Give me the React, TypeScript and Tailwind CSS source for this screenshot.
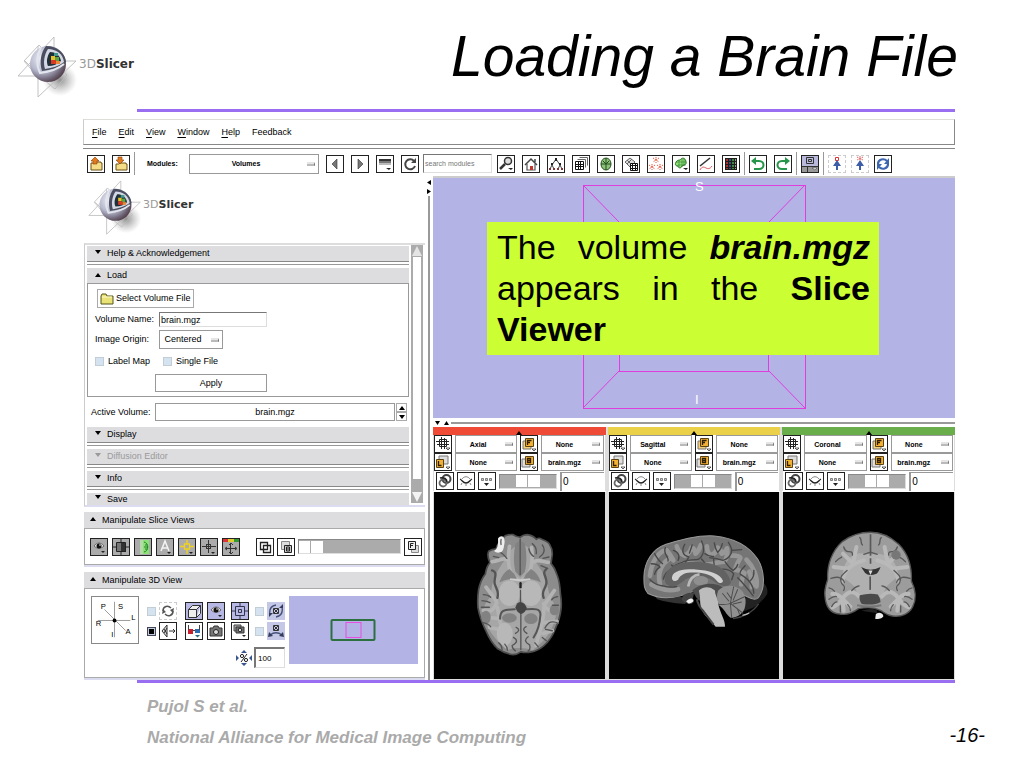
import { ReactNode } from 'react';
import clsx from 'clsx';

const icons: Record<string, ReactNode> = {
  load: (
    <>
      <path d="M3 7h3l1-1h6v1h1v7H3z" fill="#f5dc86" stroke="#6b5215" />
      <path d="M7 1L3 5h2v3h4V5h2z" fill="#e07a1c" stroke="#8a3d08" strokeWidth=".6" />
    </>
  ),
  save: (
    <>
      <path d="M3 8h3l1-1h6v1h1v6H3z" fill="#f5dc86" stroke="#6b5215" />
      <path d="M7 8L3 4h2V1h4v3h2z" fill="#e07a1c" stroke="#8a3d08" strokeWidth=".6" />
    </>
  ),
  prev: <path d="M10 3v10L5 8z" fill="#777" stroke="#333" strokeWidth=".6" />,
  next: <path d="M6 3v10l5-5z" fill="#777" stroke="#333" strokeWidth=".6" />,
  history: (
    <>
      <path d="M2 3h12v3H2z" fill="#333" />
      <path d="M2 5h12v2H2z" fill="#777" />
      <path d="M2 7h12v2H2z" fill="#bbb" />
      <path d="M9 12h5l-2 2z" fill="#222" />
    </>
  ),
  refresh: (
    <>
      <path d="M12 5A5 5 0 1 0 13 10" fill="none" stroke="#444" strokeWidth="2" />
      <path d="M14 2v5H9z" fill="#444" />
    </>
  ),
  search: (
    <>
      <circle cx="10" cy="5" r="3.5" fill="#ddd" stroke="#333" strokeWidth="1.5" />
      <path d="M7 8l-5 5" stroke="#333" strokeWidth="2.5" />
      <path d="M10 12h5l-2 2z" fill="#222" />
    </>
  ),
  home: (
    <>
      <path d="M4 8v6h8V8" fill="#fff" stroke="#555" strokeWidth="1.2" />
      <path d="M2 9l6-6 6 6M12 6V3" fill="none" stroke="#444" strokeWidth="1.5" />
      <path d="M7 10h3v4H7z" fill="#c0392b" />
    </>
  ),
  tree: (
    <>
      <path d="M8 3L4 9l-2 4M4 9l2 4M8 3l4 6-2 4M12 9l2 4" fill="none" stroke="#444" />
      <path d="M7 2h2v3H7zM3 7h2v2H3zM11 7h2v2h-2z" fill="#222" />
      <path d="M1 12h2v2H1zM5 12h2v2H5zM9 12h2v2H9zM13 12h2v2h-2z" fill="#833" />
    </>
  ),
  volumes: (
    <>
      <path d="M6.500 1.500h8v8M4.500 3.500h8v8" fill="none" stroke="#666" />
      <path d="M2.500 5.500h8v8h-8zM2 8.500h8M2 10.500h8M5.500 6v8M7.500 6v8" fill="#fff" stroke="#111" />
    </>
  ),
  globe: (
    <>
      <ellipse cx="8" cy="8" rx="5" ry="6" fill="#8cc276" stroke="#244d20" />
      <path d="M8 2v12M3 8h10M5 5l3 3 3-3" stroke="#244d20" fill="none" />
    </>
  ),
  transform: (
    <>
      <path d="M2 6l5-4 5 4-5 5zM4 4l5 5M4 8l5-5" fill="#ddd" stroke="#666" />
      <path d="M7.500 7.500h7v7h-7zM7 9.500h7M7 12.500h7M9.500 7v7M12.500 7v7" fill="#fff" stroke="#111" />
    </>
  ),
  fiducials: (
    <g stroke="#ea5a43" fill="none" strokeDasharray="1.500 1">
      <path d="M8 1v6M5 2l6 4M11 2L5 6" />
      <path d="M4 8v6M1 9l6 4M7 9l-6 4" />
      <path d="M12 8v6M9 9l6 4M15 9l-6 4" />
    </g>
  ),
  surface: (
    <>
      <path d="M3 6c2-3 4-1 5-3 2-2 5 0 5 3 1 3-3 3-4 4-1 3-4 2-4 0-3 0-3-2-2-4z" fill="#8ee07a" stroke="#276d23" />
      <path d="M3 6h10M5 9h8M6 4v7M9 3v8M11 2v8" stroke="#276d23" strokeWidth=".5" />
      <path d="M10 12h5l-2 2z" fill="#222" />
    </>
  ),
  measure: (
    <>
      <path d="M2 10l10-8" stroke="#333" strokeWidth="1.6" />
      <path d="M2 14c2-4 4-3 6-2s4 1 6-2" stroke="#d55" fill="none" />
    </>
  ),
  colors: (
    <>
      <path d="M2 2h12v12H2z" fill="#1d1d1d" />
      <path d="M3 3h2v10H3z" fill="#a33" />
      <path d="M6 3h2v10H6z" fill="#394a78" />
      <path d="M9 3h2v10H9z" fill="#3e8a3e" />
      <path d="M12 3h1v10h-1z" fill="#999" />
      <path d="M2 5.500h12M2 8.500h12M2 11.500h12" stroke="#1d1d1d" />
    </>
  ),
  undo: (
    <>
      <path d="M4 5h5c6 0 6 8 0 8H4" fill="none" stroke="#25954a" strokeWidth="2" />
      <path d="M6 1v8L1 5z" fill="#25954a" />
    </>
  ),
  redo: (
    <>
      <path d="M12 5H7c-6 0-6 8 0 8h5" fill="none" stroke="#25954a" strokeWidth="2" />
      <path d="M10 1v8l5-4z" fill="#25954a" />
    </>
  ),
  layout: (
    <>
      <path d="M0 0h16v10H0z" fill="#b9b9dc" />
      <path d="M0 11h16v5H0z" fill="#999" />
      <path d="M4.500 1.500h7v6h-7zM6.500 3.500h3v2h-3zM0 10.500h16M5.500 11v5" fill="none" stroke="#333" />
      <path d="M10 12h5l-2 2z" fill="#fff" stroke="#333" strokeWidth=".5" />
    </>
  ),
  pick: (
    <>
      <path d="M6.500 1.500h3v3h-3z" fill="none" stroke="#d33" />
      <path d="M8 4l4 6H9v4H7v-4H4z" fill="#3c5da8" />
    </>
  ),
  place: (
    <>
      <path d="M8 0v4M5 1l6 3M11 1L5 4" stroke="#e05a5a" strokeDasharray="1.500 1" />
      <path d="M8 4l4 6H9v4H7v-4H4z" fill="#3c5da8" />
    </>
  ),
  sync: (
    <>
      <path d="M3 8c0-5 6-6 9-3M13 8c0 5-6 6-9 3" fill="none" stroke="#3c66b0" strokeWidth="2.200" />
      <path d="M14 2v6H9zM2 14V8h5z" fill="#3c66b0" />
    </>
  ),
  eye: (
    <>
      <path d="M3 7c3-4 7-4 10 0-3 3-7 3-10 0z" fill="#ddd" stroke="#555" strokeWidth=".8" />
      <circle cx="8" cy="7" r="2.500" fill="#111" />
      <circle cx="9" cy="6" r=".8" fill="#fff" />
      <path d="M10 12h4l-2 2z" fill="#222" />
    </>
  ),
  contrast: (
    <>
      <path d="M4 4h9v9H4z" fill="#333" />
      <path d="M4 4h4v9H4z" fill="#777" />
      <path d="M8 0v4M8 13v3M0 8h4M13 8h3M3.500 3.500h9v9h-9z" fill="none" stroke="#222" />
    </>
  ),
  label: (
    <>
      <path d="M0 0h5v16H0z" fill="#ababab" />
      <path d="M8 1h6v14H8z" fill="#8be274" />
      <path d="M5 1h3v14H5z" fill="#b5d9aa" />
      <path d="M9 3c5 1 5 9 0 10M10 6h2M9 8h4M10 10h2" fill="none" stroke="#208325" />
    </>
  ),
  annotate: (
    <>
      <path d="M4 12L8 2l4 10M5 9h6" fill="none" stroke="#f4f4f4" strokeWidth="1.500" />
      <path d="M10 13h4l-2 2z" fill="#222" />
    </>
  ),
  crosshairYellow: (
    <>
      <path d="M8 1v4M8 10v5M1 7.500h4M11 7.500h4M5.500 5h5v5h-5z" fill="none" stroke="#f2d21c" strokeWidth="1.300" />
      <path d="M10 13h4l-2 2z" fill="#222" />
    </>
  ),
  crosshair: (
    <>
      <path d="M7.500 1v13M1 7.500h14M5.500 5v5M9.500 5v5M5 5.500h5M5 9.500h5" stroke="#333" />
      <path d="M10 13h4l-2 2z" fill="#222" />
    </>
  ),
  fitMulti: (
    <>
      <path d="M0 0h5v3H0z" fill="#d33" />
      <path d="M5 0h6v3H5z" fill="#dc3" />
      <path d="M11 0h5v3h-5z" fill="#393" />
      <path d="M7.500 4v10M3 9.500h10M6 6l2-2 2 2M6 13l2 2 2-2M4 8L2 9.500 4 11M12 8l2 1.500-2 1.500" fill="none" stroke="#333" />
    </>
  ),
  overlap: (
    <>
      <path d="M3.500 3.500h7v7h-7z" fill="none" stroke="#222" strokeWidth="1.300" />
      <path d="M6.500 6.500h7v7h-7z" fill="none" stroke="#222" strokeWidth="1.300" />
    </>
  ),
  background: (
    <>
      <path d="M3.500 2.500h8v8h-8z" fill="#ddd" stroke="#888" />
      <path d="M6.500 6.500h7v7h-7z" fill="#ccc" stroke="#222" />
      <path d="M8.500 8v4h3V8zM8.500 10h3" fill="none" stroke="#222" />
    </>
  ),
  foreground: (
    <>
      <path d="M6.500 6.500h7v7h-7z" fill="#ddd" stroke="#888" />
      <path d="M3.500 2.500h7v8h-7z" fill="#eee" stroke="#222" />
      <path d="M5.500 9V4.500h3M6 6.500h2" fill="none" stroke="#222" />
    </>
  ),
  spin: (
    <>
      <path d="M3 8c0-5 5-6 8-3M13 8c0 5-5 6-8 3" fill="none" stroke="#555" strokeWidth="1.500" />
      <path d="M14 5l-1 5-3-3zM2 11l1-5 3 3z" fill="#555" />
    </>
  ),
  rock: (
    <>
      <path d="M7 2v12L2 8zM4 6l3 5M4 10l3-5" fill="#ddd" stroke="#333" />
      <path d="M9 8h6M13 6l2 2-2 2" fill="none" stroke="#333" />
    </>
  ),
  cube: (
    <path d="M2.500 6.500h8v8h-8zM2.500 6.500l4-4h8l-4 4M14.500 2.500v8l-4 4" fill="#eee" stroke="#333" />
  ),
  target: (
    <path d="M8 0v3M8 13v3M0 8h3M13 8h3M3.500 3.500h9v9h-9zM6.500 6.500h3v3h-3z" fill="none" stroke="#33334d" />
  ),
  stereo: (
    <>
      <path d="M2 6h5v5H2z" fill="#c9202e" />
      <path d="M9 6h5v4H9z" fill="#2e6db0" />
      <path d="M2.500 7V2M13.500 7V2M7 7.500h2" stroke="#444" fill="none" />
      <path d="M9 12h5l-2.500 2.500z" fill="#2a6b80" />
    </>
  ),
  camera: (
    <>
      <path d="M2 5h3l1-2h4l1 2h3v8H2z" fill="#777" stroke="#333" />
      <circle cx="8" cy="9" r="2.500" fill="#ddd" stroke="#222" />
    </>
  ),
  cameras: (
    <>
      <path d="M2 2h7v6H2z" fill="#aaa" stroke="#444" />
      <path d="M4 4h8v6H4z" fill="#777" stroke="#333" />
      <circle cx="8" cy="7" r="1.800" fill="#ddd" stroke="#222" />
      <path d="M10 12h4l-2 2z" fill="#222" />
    </>
  ),
  orbit: (
    <>
      <path d="M5.500 5.500h5v5h-5zM6 6l4 4M10 6l-4 4" fill="none" stroke="#333" />
      <path d="M2 12c-1-5 1-9 6-10M14 4c1 5-1 9-6 10" fill="none" stroke="#44507a" strokeWidth="1.300" />
      <path d="M15 1v4h-4zM1 14v-4h4z" fill="#333c5f" />
    </>
  ),
  sweep: (
    <>
      <path d="M5.500 2.500h5v5h-5zM6 3l4 4M10 3L6 7" fill="none" stroke="#333" />
      <path d="M2 12c4-3 8-3 12 0" fill="none" stroke="#44507a" strokeWidth="1.300" />
      <path d="M0 14l1-5 4 4zM16 14l-1-5-4 4z" fill="#333c5f" />
    </>
  ),
  fit: (
    <>
      <path d="M4.500 3.500h7v7h-7zM6.500 1v12M1 5.500h13M9.500 2v11M2 8.500h12" fill="none" stroke="#222" />
      <path d="M11 12h4l-2 2z" fill="#fff" stroke="#222" strokeWidth=".7" />
    </>
  ),
  link: (
    <>
      <circle cx="9.500" cy="6" r="4" fill="none" stroke="#444" strokeWidth="2" />
      <circle cx="6" cy="10" r="3.500" fill="none" stroke="#666" strokeWidth="1.800" />
      <path d="M3 5c4-1 7 1 7 4" fill="none" stroke="#222" strokeWidth="1.500" />
    </>
  ),
  closedEye: (
    <>
      <path d="M2 6c2 1 3 4 6 4s4-3 6-4" fill="none" stroke="#222" strokeWidth="1.300" />
      <path d="M4 6c2-3 6-3 8 0M4 10l-1 2M8 11v2M12 10l1 2" fill="none" stroke="#888" />
    </>
  ),
  more: (
    <>
      <path d="M2.500 5.500h2v2h-2zM6.500 5.500h2v2h-2zM10.500 5.500h2v2h-2z" fill="#ccc" stroke="#555" strokeWidth=".7" />
      <path d="M5 10h5l-2.500 3z" fill="#222" />
    </>
  ),
  zoomPercent: (
    <>
      <path d="M8 0l3 3H5zM8 16l3-3H5zM0 5v6l3-3zM16 5v6l-3-3z" fill="#3b5590" />
      <circle cx="6" cy="6" r="1.600" fill="none" stroke="#222" />
      <circle cx="10" cy="10" r="1.600" fill="none" stroke="#222" />
      <path d="M11 4l-6 8" stroke="#222" />
    </>
  ),
};

const layerGlyphs: Record<string, string> = {
  F: 'M6.500 9V4.500h4M6 6.500h3',
  B: 'M6.500 4.500v4h3v-4zM6 6.500h3',
  L: 'M6.500 4v4.500h3',
};

function IconButton({
  name,
  className = 'border-[#222] bg-white',
}: {
  name: string;
  className?: string;
}) {
  return (
    <button
      type="button"
      aria-label={name}
      className={clsx('size-[18px] shrink-0 border', className)}
    >
      <svg viewBox="0 0 16 16" className="size-4">
        {icons[name]}
      </svg>
    </button>
  );
}

function LayerButton({ layer }: { layer: 'F' | 'B' | 'L' }) {
  return (
    <button
      type="button"
      aria-label={layer}
      className="size-[18px] shrink-0 border border-[#222] bg-white"
    >
      <svg viewBox="0 0 16 16" className="size-4">
        {layer === 'F' ? (
          <path d="M2 5h8v8H2z" fill="#f6cf7a" stroke="#777" />
        ) : (
          <path d={layer === 'L' ? 'M4 2h9v8H4z' : 'M1 5h8v8H1z'} fill="#ddd" stroke="#777" />
        )}
        <path
          d={layer === 'L' ? 'M1.500 5.500h7v8h-7z' : 'M4.500 2.500h8v8h-8z'}
          fill="#f2b035"
          stroke="#5a4212"
        />
        <path
          d={layerGlyphs[layer]}
          transform={layer === 'L' ? 'translate(-3 3)' : undefined}
          fill="none"
          stroke="#2d1f05"
          strokeWidth="1.300"
        />
        <path d="M11 13h4l-2 2z" fill="#fff" stroke="#222" strokeWidth=".7" />
      </svg>
    </button>
  );
}

function Dropdown({
  label,
  value,
  className,
}: {
  label: string;
  value: string;
  className?: string;
}) {
  return (
    <div className={clsx('relative min-w-0', className)}>
      <select
        aria-label={label}
        className="block h-full w-full appearance-none border border-[#999] bg-white pr-4 [text-align-last:center]"
      >
        <option>{value}</option>
      </select>
      <span className="pointer-events-none absolute top-1/2 right-1 h-[3px] w-2 -translate-y-1/2 border-t border-r border-b border-t-[#ccc] border-r-[#777] border-b-[#777]" />
    </div>
  );
}

function Slider({
  label,
  value,
  className,
}: {
  label: string;
  value: number;
  className?: string;
}) {
  return (
    <input
      type="range"
      aria-label={label}
      defaultValue={value}
      className={clsx(
        'block min-w-0 appearance-none border border-t-[#888] border-r-[#ddd] border-b-[#ddd] border-l-[#888] bg-[#ababab] [&::-webkit-slider-thumb]:h-3 [&::-webkit-slider-thumb]:w-6 [&::-webkit-slider-thumb]:appearance-none [&::-webkit-slider-thumb]:bg-[linear-gradient(90deg,#fff_11px,#aaa_11px,#aaa_12px,#fff_12px)]',
        className,
      )}
    />
  );
}

function CheckBox({ id, checked }: { id: string; checked?: boolean }) {
  return (
    <input
      type="checkbox"
      id={id}
      aria-label={id}
      defaultChecked={checked}
      className="size-[9px] shrink-0 appearance-none border border-[#c3cdd6] bg-[#d5e2ef] checked:border-[#445] checked:bg-black checked:outline checked:-outline-offset-2 checked:outline-[#bcd]"
    />
  );
}

function Logo({ className, textClassName }: { className: string; textClassName: string }) {
  return (
    <div className="flex items-start">
      <svg viewBox="0 0 62 62" className={className}>
        <defs>
          <radialGradient id="sphere" cx=".35" cy=".35" r=".75">
            <stop offset="0" stopColor="#f4f5fb" />
            <stop offset=".5" stopColor="#b4b6cb" />
            <stop offset=".8" stopColor="#6a6172" />
            <stop offset="1" stopColor="#4a3038" />
          </radialGradient>
          <radialGradient id="shadow">
            <stop offset="0" stopColor="#777" stopOpacity=".8" />
            <stop offset="1" stopColor="#999" stopOpacity="0" />
          </radialGradient>
        </defs>
        <ellipse cx="43" cy="44" rx="17" ry="16" fill="url(#shadow)" />
        <g fill="none" stroke="#bbb" strokeWidth=".9">
          <path d="M37 1L1 40h30M37 1v18M21 10v51l38-36H40" />
          <path d="M7 25L22 9l28 30-12 14L14 33zM8 25l14 14" />
        </g>
        <circle cx="31" cy="28" r="18" fill="url(#sphere)" />
        <path d="M29 10c-5 6-7 16-4 25 8-1 17-3 24-9-1-9-9-16-20-16z" fill="#4a4e60" />
        <path d="M31 13c-4 6-5 14-3 20 7-1 14-3 19-7-1-8-8-13-16-13z" fill="#d4d8e4" />
        <path d="M33 16c-3 4-4 10-2 14 5 0 10-2 13-5-1-6-6-9-11-9z" fill="#20303a" />
        <path d="M34 20h4v4h-4z" fill="#e8c22c" />
        <path d="M38 21h4v4h-4z" fill="#5da342" />
        <path d="M34 24h5v4h-5z" fill="#d63a22" />
        <path d="M37 17h4v3h-4z" fill="#3f9a8a" />
        <path d="M39 25h4v3h-4z" fill="#e9893a" />
        <path d="M24 11c-4 8-5 18-1 26 9-1 18-4 24-9" fill="none" stroke="#e4e6ee" strokeWidth="2" />
      </svg>
      <div className={clsx("font-['DejaVu_Sans',sans-serif] text-[#333]", textClassName)}>
        <span className="text-[#999]">3D</span>
        <span className="font-bold">Slicer</span>
      </div>
    </div>
  );
}

function SectionHeader({
  title,
  open,
  disabled,
  className = 'h-[15px] pl-2',
}: {
  title: string;
  open?: boolean;
  disabled?: boolean;
  className?: string;
}) {
  return (
    <button
      type="button"
      disabled={disabled}
      className={clsx(
        'flex w-full items-center gap-[6px] bg-[#dddde0] text-left leading-[9px]',
        disabled && 'text-[#999]',
        className,
      )}
    >
      <svg viewBox="0 0 6 8" className="h-2 w-[6px]">
        <path d={open ? 'M0 5h6L3 1z' : 'M0 0h6L3 4z'} fill="currentColor" />
      </svg>
      {title}
    </button>
  );
}

function CollapsedSection({ title, disabled }: { title: string; disabled?: boolean }) {
  return (
    <div className="mb-[3px]">
      <SectionHeader title={title} disabled={disabled} />
      <div className="h-1 border-y border-t-[#888] border-b-[#999]" />
    </div>
  );
}

function ModulePanel() {
  return (
    <div className="flex h-[264px] border-t-2 border-b-2 border-l border-t-[#ddd] border-b-[#dcdcf0] border-l-[#ccc]">
      <div className="min-w-0 flex-1 overflow-hidden pt-px pl-[2px]">
        <CollapsedSection title="Help & Acknowledgement" />
        <SectionHeader title="Load" open />
        <div className="border border-[#999] pt-[5px] pb-1 pl-[7px]">
          <button type="button" className="ml-[2px] flex h-[19px] items-center gap-[2px] border border-[#aaa] px-[2px]">
            <svg viewBox="0 0 14 12" className="h-3 w-[14px]">
              <path d="M1 3l1-2h4l1 2h6v8H1z" fill="#e8e277" stroke="#555518" />
              <path d="M2 4h10" stroke="#fffbd0" />
            </svg>
            Select Volume File
          </button>
          <div className="mt-1 grid grid-cols-[64px_1fr] items-center gap-y-[3px]">
            <label htmlFor="volume-name">Volume Name:</label>
            <input
              id="volume-name"
              defaultValue="brain.mgz"
              className="h-[15px] w-[108px] border border-t-[#777] border-r-[#ddd] border-b-[#ddd] border-l-[#777] px-px"
            />
            <span>Image Origin:</span>
            <Dropdown label="Image Origin" value="Centered" className="h-[19px] w-16" />
          </div>
          <div className="mt-[7px] grid h-[11px] grid-cols-[9px_51px_9px_1fr] items-center gap-x-1 pl-0">
            <CheckBox id="label-map" />
            <label htmlFor="label-map">Label Map</label>
            <CheckBox id="single-file" />
            <label htmlFor="single-file">Single File</label>
          </div>
          <button type="button" className="mt-[7px] ml-[60px] block h-[18px] w-28 border border-[#999]">
            Apply
          </button>
        </div>
        <div className="my-[6px] flex h-[18px] items-center pr-[2px] pl-1">
          <label htmlFor="active-volume" className="w-16">
            Active Volume:
          </label>
          <input
            id="active-volume"
            defaultValue="brain.mgz"
            className="h-full min-w-0 flex-1 border border-[#999] text-center"
          />
          <div className="ml-px flex w-[11px] flex-col">
            <button type="button" aria-label="up" className="flex h-[9px] items-center justify-center border border-[#aaa]">
              <svg viewBox="0 0 6 4" className="h-1 w-[6px]"><path d="M0 4h6L3 0z" /></svg>
            </button>
            <button type="button" aria-label="down" className="flex h-[9px] items-center justify-center border border-[#aaa]">
              <svg viewBox="0 0 6 4" className="h-1 w-[6px]"><path d="M0 0h6L3 4z" /></svg>
            </button>
          </div>
        </div>
        <CollapsedSection title="Display" />
        <CollapsedSection title="Diffusion Editor" disabled />
        <CollapsedSection title="Info" />
        <SectionHeader title="Save" className="h-3 pl-2" />
      </div>
      <div className="mx-[2px] mb-[2px] flex w-3 flex-col bg-[#ababab]">
        <svg viewBox="0 0 12 12" className="size-3"><path d="M1 11h10L6 1z" fill="#e4e4e4" /></svg>
        <div className="mx-[2px] flex-1 bg-white" />
        <div className="h-3" />
        <svg viewBox="0 0 12 12" className="size-3"><path d="M1 1h10L6 11z" fill="#f4f4f4" /></svg>
      </div>
    </div>
  );
}

const sliceTools = ['eye', 'contrast', 'label', 'annotate', 'crosshairYellow', 'crosshair', 'fitMulti'];

function SliceViewsPanel() {
  return (
    <div className="mt-[5px] border-b-2 border-[#dcdcf0]">
      <SectionHeader title="Manipulate Slice Views" open className="h-4 pl-[6px]" />
      <div className="flex h-[37px] items-center border border-[#aaa] pr-[2px] pl-[5px]">
        <div className="flex gap-1">
          {sliceTools.map((name) => (
            <IconButton key={name} name={name} className="border-[#222] bg-[#ababab]" />
          ))}
        </div>
        <div className="ml-4 flex min-w-0 flex-1 items-center gap-[3px]">
          <IconButton name="overlap" />
          <IconButton name="background" />
          <Slider label="Fade" value={0} className="h-[15px] flex-1" />
          <IconButton name="foreground" />
        </div>
      </div>
    </div>
  );
}

function AxesWidget() {
  return (
    <svg viewBox="0 0 48 48" className="size-12 shrink-0 border border-[#888] font-['Liberation_Sans',sans-serif] text-[8px]">
      <path d="M23.500 5v37M6 24.500h34M13 13l22 22" stroke="#999" fill="none" />
      <circle cx="23.500" cy="24.500" r="2" />
      <text x="9" y="13">P</text>
      <text x="27" y="12">S</text>
      <text x="41" y="24">L</text>
      <text x="4" y="30">R</text>
      <text x="20" y="42">I</text>
      <text x="35" y="39">A</text>
    </svg>
  );
}

function View3DPanel() {
  return (
    <div className="mt-[5px] border-b-2 border-[#dcdcf0]">
      <SectionHeader title="Manipulate 3D View" open className="h-4 pl-[6px]" />
      <div className="flex h-[90px] items-start border border-[#aaa] pt-[7px] pr-[6px] pl-[6px]">
        <AxesWidget />
        <div className="mt-[6px] ml-2">
          <div className="grid grid-cols-[12px_26px_22px_24px_24px_12px_18px] items-center gap-y-[2px]">
            <CheckBox id="spin-view" />
            <IconButton name="spin" className="border-dashed border-[#ccc]" />
            <IconButton name="cube" className="border-[#222] bg-[#b8b8e4]" />
            <IconButton name="eye" className="border-[#222] bg-[#b8b8e4]" />
            <IconButton name="target" className="border-[#222] bg-[#b8b8e4]" />
            <CheckBox id="orbit-view" />
            <IconButton name="orbit" className="border-transparent bg-[#c4c8e6]" />
            <CheckBox id="rock-view" checked />
            <IconButton name="rock" />
            <IconButton name="stereo" />
            <IconButton name="camera" />
            <IconButton name="cameras" />
            <CheckBox id="sweep-view" />
            <IconButton name="sweep" className="border-transparent bg-[#c4c8e6]" />
          </div>
          <div className="mt-[7px] flex items-center justify-end gap-px">
            <IconButton name="zoomPercent" className="border-transparent" />
            <input
              aria-label="Zoom"
              defaultValue="100"
              className="h-[21px] w-[31px] border-t-2 border-r border-b border-l-2 border-t-[#777] border-r-[#ddd] border-b-[#ddd] border-l-[#777] px-[2px] text-[8px]"
            />
          </div>
        </div>
        <svg viewBox="0 0 128 68" className="ml-1 h-[68px] min-w-0 flex-1 bg-[#b3b3e6]">
          <rect x="42" y="24" width="43" height="20" rx="1" fill="none" stroke="#2c7040" strokeWidth="2" />
          <rect x="56.500" y="26.500" width="15" height="15" fill="none" stroke="#e84fe0" />
        </svg>
      </div>
    </div>
  );
}

const toolbarModules = ['search', 'home', 'tree', 'volumes', 'globe', 'transform', 'fiducials', 'surface', 'measure', 'colors'];

function Separator() {
  return <span className="mx-1 h-[23px] w-px bg-[#999]" />;
}

function Toolbar() {
  return (
    <div className="mt-[3px] flex h-7 items-center border-t border-[#888] pt-[2px] pl-1 text-[7px]">
      <div className="flex gap-[7px]">
        <IconButton name="load" />
        <IconButton name="save" />
      </div>
      <Separator />
      <span className="ml-2 w-[42px] font-bold">Modules:</span>
      <Dropdown label="Modules" value="Volumes" className="h-5 w-[130px] font-bold" />
      <div className="ml-[7px] flex gap-[7px]">
        <IconButton name="prev" />
        <IconButton name="next" />
        <IconButton name="history" />
        <IconButton name="refresh" />
      </div>
      <input
        aria-label="Search modules"
        placeholder="search modules"
        className="mr-[5px] ml-1 h-[19px] w-[69px] border border-t-[#777] border-r-[#ddd] border-b-[#ddd] border-l-[#777] px-px placeholder:text-[#777]"
      />
      <div className="flex gap-[7px]">
        {toolbarModules.map((name) => (
          <IconButton key={name} name={name} />
        ))}
      </div>
      <Separator />
      <div className="flex gap-[7px]">
        <IconButton name="undo" />
        <IconButton name="redo" />
      </div>
      <Separator />
      <IconButton name="layout" />
      <Separator />
      <div className="flex gap-[5px]">
        <IconButton name="pick" className="border-dashed border-[#ccc]" />
        <IconButton name="place" className="border-dashed border-[#ccc]" />
        <IconButton name="sync" />
      </div>
    </div>
  );
}

function AxialBrain() {
  return (
    <svg viewBox="18 6 507 558" className="h-full w-full">
      <path d="M232 136q10-4 20-3 12 8 22 8 10-8 20-8 18 2 28 14 8-6 16 0 22 8 24 16 8 12 8 28-2 14-4 28 12 14 18 34 8 20 10 56 4 24 2 46-4 32-16 56-12 34-36 54-20 16-36 18-18 4-32 0-14 10-28 8-24-6-42-18-20-20-32-48-20-40-26-74-2-30 2-54 6-28 20-46 4-24 14-34-10-20-4-34 14-8 22-6 4-20 28-41z" fill="#8c8c8c" stroke="#4d4d4d" strokeWidth="5" strokeLinejoin="round" />
      <path d="M246 180c-20 40-50 60-58 120-8 40-20 30-22 60 4 60 40 90 70 118 20-10 50-8 76 0 30-24 60-50 70-110 0-30-20-40-26-80-8-50-36-60-54-110-10-20-40-20-56 2z" fill="#a6a6a6" />
      <g fill="none" stroke="#b3b3b3" strokeWidth="11" strokeLinecap="round" strokeLinejoin="round">
        <path d="M268 268c-24-10-34-44-26-100M190 214c24-4 34-14 48-6M280 268c24-10 34-46 28-96M358 216c-20-2-30-10-42-2M204 336c-8 20-16 30-40 24M344 340c6 16 18 24 40 18M206 350c8 60 20 80 26 116M345 350c-2 60-14 70-24 114M172 290l30 40M376 300l-28 40M175 380l36 4M384 392l-36 4M182 410l36 8M370 420l-28 8" />
      </g>
      <g fill="#b8b8b8">
        <ellipse cx="242" cy="308" rx="32" ry="38" />
        <ellipse cx="306" cy="308" rx="32" ry="38" />
        <ellipse cx="228" cy="430" rx="24" ry="34" />
      </g>
      <g fill="#828282">
        <path d="M260 160c-6 30-6 60 0 84l14 16V150zM288 160c6 30 6 60 0 84l-14 16V150z" />
        <path d="M212 276q10-30 30-40 16 14 22 28-30 0-52 12zM336 276q-10-30-30-40-16 14-22 28 30 0 52 12z" />
        <ellipse cx="242" cy="382" rx="22" ry="14" />
        <ellipse cx="306" cy="384" rx="20" ry="16" />
        <ellipse cx="376" cy="358" rx="14" ry="16" />
        <ellipse cx="172" cy="380" rx="14" ry="20" />
      </g>
      <g fill="none" stroke="#555" strokeWidth="4" strokeLinecap="round" strokeLinejoin="round">
        <path d="M274 146v106M275 300v34M276 364v112" />
        <path d="M275 278v12" stroke="#222" strokeWidth="7" />
        <path d="M190 240c20 6 4 24 8 40s14 20 8 42M352 236c-16 12 4 24 0 44s-16 20-8 42" strokeWidth="7" />
        <path d="M214 384c0-30 20-26 44-28M294 356c20-2 44-4 40 20-2 30-8 46-20 64" strokeWidth="6" />
        <path d="M210 184c12 4 18 12 24 20M194 198l16 4M310 160q14 10 12 30M300 176q4 16 14 22M340 164q14 20-8 36M360 200l-18 4M336 226l20 8" />
        <path d="M164 312q14 0 22 8M160 330q16 2 24 6M158 350h24M164 396q16 4 22 12M386 318q-14 2-18 10M388 344h-18M388 398q-26-14-40 14M370 420l-20-4" />
        <path d="M210 456q10 8 10 20M228 460q8 8 8 18M254 440q20 12-4 24 0 10 10 16M298 438q-18 12 4 24 4 14-4 18M318 456l10 12M340 440l12 10M262 410q16 8-2 18M292 408q-16 8 2 20" />
      </g>
      <path d="M260 350q4-16 16-16 12 2 18 18-4 14-18 18-14-6-16-20z" fill="#444" />
      <path d="M244 266c20 4 40 4 60 0" fill="none" stroke="#ccc" strokeWidth="5" />
      <path d="M208 144q8-10 16-4 6 10 2 26-2 18-10 20-12 4-20-4 14-6 12-38z" fill="#eee" />
      <path d="M217 148q-2 8 0 14" fill="none" stroke="#777" strokeWidth="5" strokeLinecap="round" />
    </svg>
  );
}

function SagittalBrain() {
  return (
    <svg viewBox="15 6 507 558" className="h-full w-full">
      <path d="M460 270q30 10 26 40-16 26-44 42l-56 22z" fill="#222" />
      <path d="M132 296l92 20q24 12 18 24-60-4-84-14z" fill="#333" />
      <path d="M118 262c0-48 26-86 66-100 40-12 90-28 144-25 60 6 104 30 130 70 20 34 24 84 2 114-16 14-30-6-60-12-40-10-90 10-130-8-50 22-100 28-140 8-12-14-12-28-12-47z" fill="#757575" stroke="#999" strokeWidth="3" />
      <g fill="none" stroke="#979797" strokeWidth="14" strokeLinecap="round" strokeLinejoin="round">
        <path d="M136 256c4-30 14-60 40-74M166 280c-8-30 2-60 30-76M186 180q10 10 20 30M216 168q4 20 24 28 16-8 20-24 10 2 12 18 10-8 16-26M306 168q0 18 12 28 16-8 20-24 10 4 12 18 12-4 16-16 4 24-8 40l-30 4M220 226q20-10 40-8l30 6 36-4M380 196q18-2 26 6-10 16-16 36 18 2 28 10-8 14-10 34M424 208c20 20 34 50 30 80M140 282c30 16 50 20 80 14M432 244q10 20 8 46" />
      </g>
      <g fill="none" stroke="#484848" strokeWidth="4" strokeLinecap="round" strokeLinejoin="round">
        <path d="M150 190q10 20 24 30M182 172c-8 20 12 28 8 40M206 180c16 4 20 20 14 30M240 162q-16 30 12 38M262 164l-8 24M290 152q10 24 4 38-8 18-20 18-26 0-42 8-22 6-32 20-20 10-24 30M300 190q14 10 26 8M328 158q4 20 10 28 10-8 14-26M370 156q14 20 8 34-8 16-24 20-20-6-40-8M380 180l30-2M360 214q14 20 24 26 12-8 14-18M352 236q24 0 34 14l-6 18M420 226q-20 20-14 26 24 14 30 26 10 14 10 30M446 240q2 20-10 30M398 262q20 20 46 54M140 220q20 0 26 10-14 8-16 22M136 268q20 18 40 18 20 6 40 2M200 224l20 12M250 204l-10 16M290 206l10 12M326 206l2 24" />
      </g>
      <path d="M182 276c-8-40 30-62 90-62 60 2 96 20 106 62-10 20-30 10-50-2-20-20-60-20-86-8-20 20-48 30-60 10z" fill="#626262" />
      <path d="M220 268c-12 8-20 2-18-8 2-20 38-24 70-23 40 2 74 12 82 34-2 10-12 8-20-2-20-24-62-24-84-22-14 2-26 10-30 21z" fill="#d0d0d0" />
      <path d="M250 288c4-20 14-34 34-36" fill="none" stroke="#b8b8b8" strokeWidth="8" />
      <ellipse cx="288" cy="271" rx="22" ry="14" fill="#8f8f8f" />
      <path d="M262 300q20-18 50-20 30 0 42 12 4 20-6 40-14 10-34 8-30-4-40-20z" fill="#4d4d4d" />
      <path d="M340 300c14-14 34-18 54-10 22 8 32 30 26 58-4 20-20 32-42 34-14-8-20-28-36-38-6-16-8-30-2-44z" fill="#8f8f8f" />
      <g fill="none" stroke="#4d4d4d" strokeWidth="3">
        <path d="M342 342q30 0 34-4l10-50M376 338l44-20M376 338l38 30M376 338l4 44M366 306l14 20M398 296l-14 34M410 334l-26 6M352 308l20 24M396 352l8 20" />
      </g>
      <path d="M282 300c16-14 34-12 48 0 0 14 8 20 10 40 4 24 22 50 20 68h-28c-14-20-38-34-44-58-4-20 0-24-6-50z" fill="#bcbcbc" />
      <path d="M276 326q4 20 20 36l30 40" fill="none" stroke="#444" strokeWidth="6" />
      <path d="M238 312q14-8 30-6-6 16-2 30-10 8-20 2-14-4-16-14z" fill="#444" />
      <path d="M244 332q10-10 16-8 8 4 6 8-8 8-16 6z" fill="#f0f0f0" />
      <path d="M384 384c30-4 60-20 76-44" fill="none" stroke="#444" strokeWidth="4" />
      <path d="M412 374q12-2 20-7" fill="none" stroke="#bbb" strokeWidth="4" />
    </svg>
  );
}

function CoronalHalf() {
  return (
    <>
      <g fill="none" stroke="#b9b9b9" strokeWidth="12" strokeLinecap="round" strokeLinejoin="round">
        <path d="M252 210c-40 10-60 30-64 64M230 170l-8 40M190 190l24 24M162 230l40 4M188 324q14-20 30-20 12 4 20 14M188 324q-14-14-30-14M188 324q-14 20-30 26M188 324l4 36M188 324l24 24" />
      </g>
      <g fill="none" stroke="#595959" strokeWidth="4" strokeLinecap="round" strokeLinejoin="round">
        <path d="M240 142c8 8 0 16 8 22M192 170q4 12 12 14 16-2 14 10M168 214q8-10 18-14M154 264q20-6 26-2 12 4 14 14M202 240c-16 14-22 20-18 34s16 8 8 26M252 192l18-6M148 292q10 2 16 10M148 326q14-10 22-8M156 348q8-14 16-14M182 364v-18M212 360q0-10-8-18M216 300q10-12 22-14" />
      </g>
    </>
  );
}

function CoronalBrain() {
  return (
    <svg viewBox="12 6 507 558" className="h-full w-full">
      <path d="M272 126c34 0 60 14 84 36 26 26 40 64 38 110 12 24 16 52 4 76-10 20-32 32-60 28-20-2-24-12-40-18-16-8-40-8-62-4-16 12-34 20-56 16-28-2-42-24-44-54-2-20 2-30 8-48-2-50 14-86 44-114 24-18 50-28 84-28z" fill="#9c9c9c" stroke="#555" strokeWidth="4" />
      <path d="M256 190c-40-10-70 30-66 70 20 20 40 20 44 60h76c4-40 24-40 44-64 0-40-30-70-70-64z" fill="#b0b0b0" />
      <CoronalHalf />
      <g transform="translate(544 0) scale(-1 1)">
        <CoronalHalf />
      </g>
      <path d="M272 132v64M272 204v16" stroke="#595959" strokeWidth="5" />
      <ellipse cx="348" cy="194" rx="14" ry="14" fill="#777" />
      <path d="M244 230q14 8 28 8 14 0 30-8-6 16-12 20-10 4-18 4-10 0-16-6z" fill="#333" />
      <path d="M266 240l6 14 6-14z" fill="#ddd" />
      <path d="M271 258v40" stroke="#555" strokeWidth="5" />
      <path d="M240 314q30-8 54-2 8 12 8 22-20 12-56 6-10-14-6-26z" fill="#4a4a4a" />
      <path d="M232 344q40 8 72 0" fill="none" stroke="#777" strokeWidth="6" />
      <path d="M244 360q30-8 46-2l4 10z" fill="#222" />
      <path d="M288 370q10-6 16-2 8 4 6 10-6 6-12 6-8 2-12 0z" fill="#eee" />
    </svg>
  );
}

function SliceViewer({
  orientation,
  color,
  children,
}: {
  orientation: string;
  color: string;
  children: ReactNode;
}) {
  return (
    <div className="flex min-w-0 flex-1 flex-col bg-white">
      <div className={clsx('flex h-2 items-end justify-center', color)}>
        <svg viewBox="0 0 6 4" className="h-1 w-[6px]"><path d="M0 4h6L3 0z" /></svg>
      </div>
      <div className="grid grid-cols-[18px_1fr_18px_1fr] gap-x-[3px] border-x border-[#ddd] pr-px text-[7px] font-bold">
        <IconButton name="fit" />
        <Dropdown label="Orientation" value={orientation} className="h-[18px]" />
        <LayerButton layer="F" />
        <Dropdown label="Foreground" value="None" className="h-[18px]" />
        <LayerButton layer="L" />
        <Dropdown label="Label layer" value="None" className="h-[18px]" />
        <LayerButton layer="B" />
        <Dropdown label="Background" value="brain.mgz" className="h-[18px]" />
      </div>
      <div className="flex h-5 items-center gap-[3px] border-x border-[#ddd] pr-px pl-[2px]">
        <IconButton name="link" />
        <IconButton name="closedEye" />
        <IconButton name="more" />
        <Slider label="Slice offset" value={50} className="h-[15px] w-[58px]" />
        <input
          aria-label="Slice position"
          defaultValue="0"
          className="h-[19px] min-w-0 flex-1 border-t border-l-2 border-[#999] px-px text-[10px]"
        />
      </div>
      <div className="relative mt-px flex-1 border-x border-b border-[#ddd] bg-black pl-px">
        <div className="absolute inset-0">{children}</div>
      </div>
    </div>
  );
}

function ThreeDView() {
  return (
    <div className="relative h-60 bg-[#b3b3e6]">
      <svg viewBox="0 0 520 240" className="h-full w-full font-['Liberation_Sans',sans-serif] text-[13px]">
        <g fill="none" stroke="#e03ddd">
          <rect x="149.500" y="7.500" width="222" height="223" />
          <rect x="185.500" y="44.500" width="149" height="149" />
          <path d="M149 7l36 37M371 7l-36 37M149 230l36-37M371 230l-36-37" />
        </g>
        <text x="261" y="13" fill="#fff">S</text>
        <text x="261" y="226" fill="#fff">I</text>
      </svg>
      <p className="absolute top-11 left-[54px] w-[392px] bg-[#cf3] py-[5px] pr-[9px] pl-[10px] text-justify text-[34px] leading-[41px]">
        The volume <strong className="italic">brain.mgz</strong> appears in the{' '}
        <strong>Slice</strong> <strong>Viewer</strong>
      </p>
    </div>
  );
}

const menus = ['File', 'Edit', 'View', 'Window', 'Help'];

export default function App() {
  return (
    <div className="bg-white font-['Liberation_Sans',Arial,sans-serif] text-black">
      <header className="flex items-start justify-between pr-[66px] pl-[17px]">
        <div className="pt-9">
          <Logo className="size-[62px]" textClassName="mt-[18px] text-[12px] leading-5" />
        </div>
        <h1 className="pt-6 pb-[21px] text-[57px] leading-[64px] italic">Loading a Brain File</h1>
      </header>
      <hr className="mr-[69px] ml-[137px] border-t-[3px] border-[#996ef0]" />

      <main className="mt-[7px] mr-[69px] ml-[83px] text-[9px] leading-[11px]">
        <nav className="flex h-[26px] items-center gap-3 border border-t-[#deded8] border-r-[#888] border-b-[#888] border-l-[#ccc] pl-2">
          {menus.map((menu) => (
            <button key={menu} type="button">
              <span className="underline underline-offset-2">{menu[0]}</span>
              {menu.slice(1)}
            </button>
          ))}
          <button type="button">Feedback</button>
        </nav>
        <Toolbar />
        <div className="flex">
          <aside className="w-[342px] shrink-0 pl-px">
            <div className="h-[67px] pt-1 pl-1">
              <Logo className="size-[55px]" textClassName="mt-[15px] text-[11px] leading-5" />
            </div>
            <ModulePanel />
            <SliceViewsPanel />
            <View3DPanel />
          </aside>
          <div className="flex w-2 shrink-0 flex-col items-center">
            <svg viewBox="0 0 4 16" className="mt-1 h-4 w-1">
              <path d="M4 0v5L0 2.500zM0 9v5l4-2.500z" />
            </svg>
            <div className="w-[2px] flex-1 bg-[#999]" />
          </div>
          <div className="flex min-w-0 flex-1 flex-col border-t-2 border-[#ccc]">
            <ThreeDView />
            <div className="flex h-[9px] items-center pl-[2px]">
              <svg viewBox="0 0 16 4" className="h-1 w-4">
                <path d="M0 0h5L2.500 4zM9 4h5l-2.500-4z" />
              </svg>
              <div className="h-[2px] flex-1 bg-[#999]" />
            </div>
            <div className="flex flex-1 gap-[2px] bg-[#ddd]">
              <SliceViewer orientation="Axial" color="bg-[#ee4a36]">
                <AxialBrain />
              </SliceViewer>
              <SliceViewer orientation="Sagittal" color="bg-[#ead149]">
                <SagittalBrain />
              </SliceViewer>
              <SliceViewer orientation="Coronal" color="bg-[#6aad4b]">
                <CoronalBrain />
              </SliceViewer>
            </div>
          </div>
        </div>
      </main>

      <hr className="mr-[69px] ml-[137px] border-t-[3px] border-[#996ef0]" />
      <footer className="flex items-end justify-between pt-2 pr-[39px] pl-[147px] text-[17px] leading-[31px]">
        <div className="font-bold text-[#aaa] italic">
          <p>Pujol S et al.</p>
          <p>National Alliance for Medical Image Computing</p>
        </div>
        <span className="pb-[2px] text-[20px] italic">-16-</span>
      </footer>
    </div>
  );
}
